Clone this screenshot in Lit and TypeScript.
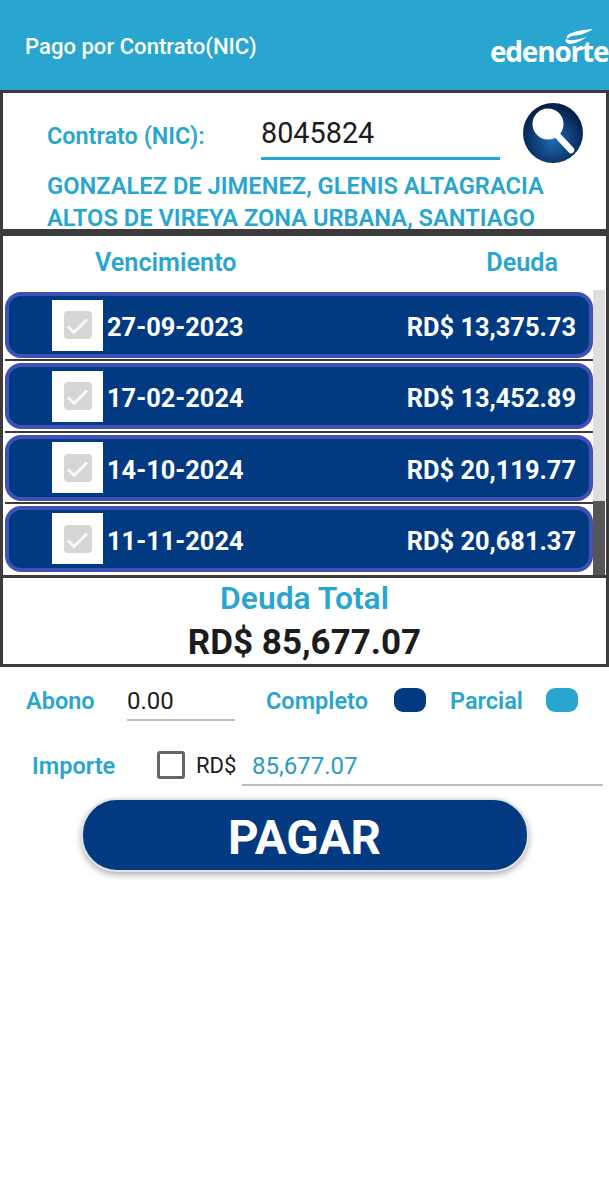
import { html, css, LitElement } from "lit";
import { customElement } from "lit/decorators.js";

const debts = [
  { date: "27-09-2023", amount: "RD$ 13,375.73" },
  { date: "17-02-2024", amount: "RD$ 13,452.89" },
  { date: "14-10-2024", amount: "RD$ 20,119.77" },
  { date: "11-11-2024", amount: "RD$ 20,681.37" },
];

@customElement("app-root")
export class AppRoot extends LitElement {
  override render() {
    return html`
      <header class="topbar">
        <span class="title">Pago por Contrato(NIC)</span>
        <div class="logo">
          <svg class="swoosh" viewBox="0 0 30 16" aria-hidden="true">
            <path d="M30 0C21 .6 10 2.4 4.5 5.4 1.6 7 1 9.6 3 10.4 5 7.6 8 7.4 12 7 18 6.2 25 3.4 30 0Z" fill="#fff" />
            <path d="M24 8C17 10.8 10 12 6.5 12 3.5 12 1.5 11.4 .8 10.2 -.2 13 1.5 16 5.5 16 10 16 18 12.4 24 8Z" fill="#fff" />
          </svg>
          <span class="logo-text">edenorte</span>
        </div>
      </header>

      <section class="panel contract">
        <div class="contract-row">
          <span class="contract-label">Contrato (NIC):</span>
          <span class="contract-input">8045824</span>
          <svg class="search" viewBox="0 0 60 60" aria-hidden="true">
            <defs>
              <radialGradient id="sg" cx="0.5" cy="0.62" r="0.55">
                <stop offset="0" stop-color="#1c6cb4" />
                <stop offset="1" stop-color="#06204e" />
              </radialGradient>
            </defs>
            <circle cx="30" cy="30" r="30" fill="url(#sg)" />
            <line x1="34" y1="32" x2="48" y2="47" stroke="#fff" stroke-width="6.5" stroke-linecap="round" />
            <circle cx="25" cy="21" r="15.5" fill="#fff" />
          </svg>
        </div>
        <div class="client">
          <div>GONZALEZ DE JIMENEZ, GLENIS ALTAGRACIA</div>
          <div>ALTOS DE VIREYA ZONA URBANA, SANTIAGO</div>
        </div>
      </section>

      <section class="panel debts">
        <div class="debts-head">
          <span class="head-date">Vencimiento</span>
          <span class="head-debt">Deuda</span>
        </div>
        <div class="list">
          <div class="rows">
            ${debts.map(
              (d) => html`
                <div class="row-wrap">
                  <div class="row">
                    <span class="check">
                      <span class="check-box">
                        <svg viewBox="0 0 28 28" aria-hidden="true">
                          <path d="M4 15.5l6 6L23 8.5" fill="none" stroke="#f7f7f7" stroke-width="3" />
                        </svg>
                      </span>
                    </span>
                    <span class="date">${d.date}</span>
                    <span class="amount">${d.amount}</span>
                  </div>
                </div>
              `
            )}
          </div>
          <div class="scrollbar"><div class="thumb"></div></div>
        </div>
      </section>

      <section class="panel total">
        <div class="total-label">Deuda Total</div>
        <div class="total-value">RD$ 85,677.07</div>
      </section>

      <div class="abono">
        <span class="label abono-label">Abono</span>
        <span class="abono-input">0.00</span>
        <span class="label completo">Completo</span>
        <span class="swatch dark"></span>
        <span class="label parcial">Parcial</span>
        <span class="swatch light"></span>
      </div>

      <div class="importe">
        <span class="label importe-label">Importe</span>
        <span class="box"></span>
        <span class="currency">RD$</span>
        <span class="importe-input">85,677.07</span>
      </div>

      <div class="actions">
        <button class="pay">PAGAR</button>
      </div>
    `;
  }

  static styles = css`
    * {
      box-sizing: border-box;
      margin: 0;
    }

    :host {
      display: block;
      width: 609px;
      height: 1200px;
      background: #fff;
      font-family: Roboto, "Liberation Sans", sans-serif;
      overflow: hidden;
    }

    .topbar {
      height: 90px;
      background: #29a6cf;
      color: #fff;
      display: flex;
      justify-content: space-between;
      padding-left: 26px;
    }

    .title {
      font-size: 22.1px;
      font-weight: 500;
      line-height: 24px;
      margin-top: 34px;
      margin-left: -1px;
    }

    .logo {
      width: 119px;
      margin-top: 29px;
      position: relative;
    }

    .logo-text {
      display: block;
      font-family: "Open Sans", sans-serif;
      font-weight: 700;
      font-size: 28px;
      line-height: 30px;
      margin-top: 7px;
      letter-spacing: -1.2px;
      white-space: nowrap;
    }

    .swoosh {
      position: absolute;
      left: 75px;
      top: 0;
      width: 28px;
      height: 15px;
    }

    .panel {
      border: 3px solid #3b3b3d;
      background: #fff;
    }

    .contract {
      height: 146px;
      border-bottom-width: 7px;
      overflow: hidden;
      padding: 10px 0 0 44px;
    }

    .contract-row {
      display: flex;
      align-items: flex-start;
      height: 64px;
    }

    .contract-label {
      width: 214px;
      margin-top: 20px;
      font-size: 23.4px;
      line-height: 26px;
      font-weight: 600;
      color: #29a6cf;
    }

    .contract-input {
      width: 239px;
      height: 45px;
      margin-top: 12px;
      padding-top: 3px;
      font-size: 28.8px;
      line-height: 30px;
      color: #1c1c1c;
      border-bottom: 3px solid #29a6cf;
    }

    .search {
      width: 60px;
      height: 60px;
      margin-left: 23px;
    }

    .client {
      color: #29a6cf;
      font-size: 23.7px;
      font-weight: 600;
      line-height: 32px;
      white-space: nowrap;
      margin-top: 3px;
    }

    .debts {
      height: 342px;
      border-top: none;
      border-bottom-width: 3px;
    }

    .debts-head {
      height: 54px;
      display: flex;
      justify-content: space-between;
      align-items: center;
      padding: 0 48px 2px 92px;
      color: #29a6cf;
      font-size: 25.2px;
      font-weight: 600;
    }

    .list {
      display: flex;
      height: 285px;
    }

    .rows {
      width: 590px;
      padding-left: 2px;
    }

    .row-wrap {
      height: 71.3px;
      padding-top: 2px;
      border-bottom: 2px solid #3b3b3d;
    }

    .row-wrap:last-child {
      border-bottom: none;
    }

    .row {
      height: 66px;
      border: 4px solid #3f51b5;
      border-radius: 16px;
      background: #023a82;
      display: flex;
      align-items: center;
      color: #fff;
      font-size: 25.4px;
      font-weight: 700;
      padding-left: 43px;
    }

    .check {
      width: 51px;
      height: 51px;
      background: #fff;
      display: flex;
      align-items: center;
      justify-content: center;
    }

    .check-box {
      width: 28px;
      height: 28px;
      border-radius: 4px;
      background: #d6d6d6;
      display: block;
    }

    .check-box svg {
      display: block;
      width: 28px;
      height: 28px;
    }

    .date {
      margin-left: 4px;
      padding-top: 4px;
    }

    .amount {
      margin-left: auto;
      padding: 4px 13px 0 0;
    }

    .scrollbar {
      flex: 1;
      background: #dedede;
      display: flex;
      flex-direction: column;
      justify-content: flex-end;
      margin-right: 1px;
    }

    .thumb {
      height: 74px;
      background: #565656;
    }

    .total {
      height: 89px;
      border-top: none;
      text-align: center;
    }

    .total-label {
      color: #29a6cf;
      font-size: 31.8px;
      font-weight: 600;
      line-height: 36px;
      padding-top: 2px;
    }

    .total-value {
      color: #1c1c1c;
      font-size: 35px;
      font-weight: 700;
      line-height: 40px;
      margin-top: 7px;
    }

    .label {
      color: #29a6cf;
      font-size: 23.5px;
      font-weight: 600;
      line-height: 28px;
    }

    .abono {
      display: flex;
      align-items: flex-start;
      height: 55px;
      padding: 20px 0 0 26px;
    }

    .abono-label {
      width: 101px;
    }

    .abono-input {
      width: 108px;
      height: 34px;
      font-size: 24px;
      line-height: 29px;
      color: #1c1c1c;
      border-bottom: 2px solid #bdbdbd;
    }

    .completo {
      margin-left: 31px;
      width: 128px;
    }

    .swatch {
      width: 32px;
      height: 24px;
      margin-top: 1px;
      border-radius: 9px;
    }

    .dark {
      background: #023a82;
    }

    .light {
      background: #29a6cf;
    }

    .parcial {
      margin-left: 24px;
      width: 96px;
    }

    .importe {
      display: flex;
      align-items: flex-start;
      height: 59px;
      padding: 24px 6px 0 32px;
    }

    .importe-label {
      width: 125px;
      margin-top: 6px;
    }

    .box {
      width: 28px;
      height: 28px;
      margin-top: 5px;
      border: 3px solid #666;
      border-radius: 3px;
    }

    .currency {
      margin-left: 11px;
      margin-top: 4px;
      width: 46px;
      font-size: 22px;
      line-height: 32px;
      color: #1c1c1c;
    }

    .importe-input {
      flex: 1;
      height: 40px;
      padding: 4px 0 0 10px;
      font-size: 24px;
      line-height: 32px;
      color: #2a9cc4;
      border-bottom: 2px solid #bdbdbd;
    }

    .actions {
      display: flex;
      justify-content: center;
      padding-top: 17px;
    }

    .pay {
      width: 448px;
      height: 74px;
      border: 2px solid #e3e3e3;
      border-radius: 36px;
      background: #023a82;
      color: #fff;
      font-family: inherit;
      font-size: 47.5px;
      font-weight: 700;
      box-shadow: 0 3px 6px rgba(0, 0, 0, 0.3);
      padding: 5px 0 0;
    }
  `;
}
